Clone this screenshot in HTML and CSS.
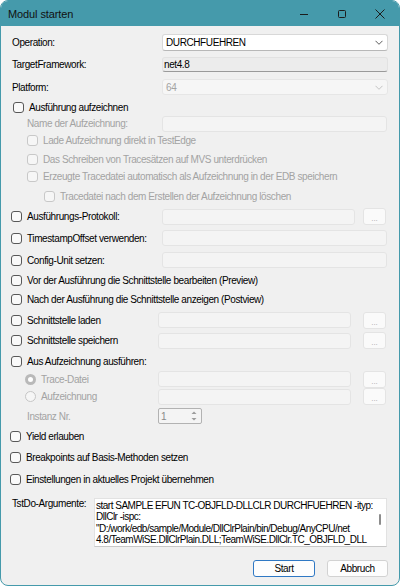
FILE: index.html
```html
<!DOCTYPE html>
<html lang="de">
<head>
    <meta charset="UTF-8">
    <meta name="viewport" content="width=device-width, initial-scale=1.0">
    <title>Modul starten</title>
    <link rel="stylesheet" href="styles.css">
</head>
<body>
<div class="window">
    <div class="titlebar">
        <span class="title">Modul starten</span>
        <div class="caption">
            <span class="cap-btn"><svg width="10" height="10" viewBox="0 0 10 10"><path d="M1 5.5h8" stroke="#1c1c1c" stroke-width="1"/></svg></span>
            <span class="cap-btn"><svg width="10" height="10" viewBox="0 0 10 10"><rect x="1.5" y="1.5" width="7" height="7" rx="1" fill="none" stroke="#1c1c1c" stroke-width="1"/></svg></span>
            <span class="cap-btn"><svg width="10" height="10" viewBox="0 0 10 10"><path d="M0.5 0.5l9 9M9.5 0.5l-9 9" stroke="#1c1c1c" stroke-width="1"/></svg></span>
        </div>
    </div>

    <div class="content">
        <div class="row h20">
            <div class="lead in11">Operation:</div>
            <div class="select">
                <span>DURCHFUEHREN</span>
                <svg width="8" height="5" viewBox="0 0 8 5"><path d="M0.5 0.8l3.5 3.5 3.5-3.5" fill="none" stroke="#5c5c5c" stroke-width="1"/></svg>
            </div>
        </div>
        <div class="row h25">
            <div class="lead in11">TargetFramework:</div>
            <div class="readonly">net4.8</div>
        </div>
        <div class="row h20">
            <div class="lead in11">Platform:</div>
            <div class="select off">
                <span>64</span>
                <svg width="8" height="5" viewBox="0 0 8 5"><path d="M0.5 0.8l3.5 3.5 3.5-3.5" fill="none" stroke="#c4c4c4" stroke-width="1"/></svg>
            </div>
        </div>

        <div class="row h20">
            <div class="lead in12"><span class="cb"></span>Ausführung aufzeichnen</div>
        </div>
        <div class="row h13">
            <div class="lead in26 gray">Name der Aufzeichnung:</div>
            <div class="tb w225"></div>
        </div>
        <div class="row h21">
            <div class="lead wide in26 gray"><span class="cb off"></span>Lade Aufzeichnung direkt in TestEdge</div>
        </div>
        <div class="row h16">
            <div class="lead wide in26 gray"><span class="cb off"></span>Das Schreiben von Tracesätzen auf MVS unterdrücken</div>
        </div>
        <div class="row h19">
            <div class="lead wide in26 gray"><span class="cb off"></span>Erzeugte Tracedatei automatisch als Aufzeichnung in der EDB speichern</div>
        </div>
        <div class="row h20">
            <div class="lead wide in43 gray"><span class="cb off"></span>Tracedatei nach dem Erstellen der Aufzeichnung löschen</div>
        </div>

        <div class="row h21">
            <div class="lead in10"><span class="cb"></span>Ausführungs-Protokoll:</div>
            <div class="tb w193"></div>
            <div class="dots gap8">...</div>
        </div>
        <div class="row h22">
            <div class="lead in10"><span class="cb"></span>TimestampOffset verwenden:</div>
            <div class="tb w225"></div>
        </div>
        <div class="row h22">
            <div class="lead in10"><span class="cb"></span>Config-Unit setzen:</div>
            <div class="tb w225"></div>
        </div>
        <div class="row h18">
            <div class="lead wide in10"><span class="cb"></span>Vor der Ausführung die Schnittstelle bearbeiten (Preview)</div>
        </div>
        <div class="row h21">
            <div class="lead wide in10"><span class="cb"></span>Nach der Ausführung die Schnittstelle anzeigen (Postview)</div>
        </div>
        <div class="row h20">
            <div class="lead short in10"><span class="cb"></span>Schnittstelle laden</div>
            <div class="tb w193"></div>
            <div class="dots gap12">...</div>
        </div>
        <div class="row h21">
            <div class="lead short in10"><span class="cb"></span>Schnittstelle speichern</div>
            <div class="tb w193"></div>
            <div class="dots gap12">...</div>
        </div>
        <div class="row h20">
            <div class="lead wide in10"><span class="cb"></span>Aus Aufzeichnung ausführen:</div>
        </div>
        <div class="row h16">
            <div class="lead short in24 gray"><span class="rb on"></span>Trace-Datei</div>
            <div class="tb w193"></div>
            <div class="dots gap12">...</div>
        </div>
        <div class="row h19">
            <div class="lead short in24 gray"><span class="rb"></span>Aufzeichnung</div>
            <div class="tb w193"></div>
            <div class="dots gap12">...</div>
        </div>
        <div class="row h20">
            <div class="lead short in26 gray">Instanz Nr.</div>
            <div class="spin">
                <span>1</span>
                <svg width="12" height="14" viewBox="0 0 12 14"><path d="M6 2.5l2.5 2.5h-5z" fill="#9c9c9c"/><path d="M3.5 9h5l-2.5 2.5z" fill="#9c9c9c"/></svg>
            </div>
        </div>

        <div class="row h21">
            <div class="lead wide in9"><span class="cb"></span>Yield erlauben</div>
        </div>
        <div class="row h20">
            <div class="lead wide in9"><span class="cb"></span>Breakpoints auf Basis-Methoden setzen</div>
        </div>
        <div class="row h24">
            <div class="lead wide in9"><span class="cb"></span>Einstellungen in aktuelles Projekt übernehmen</div>
        </div>

        <div class="args-row">
            <div class="args-label">TstDo-Argumente:</div>
            <div class="args">
                <div class="args-text">start SAMPLE EFUN TC-OBJFLD-DLLCLR DURCHFUEHREN -ityp:<br>DllClr -ispc:<br>"D:/work/edb/sample/Module/DllClrPlain/bin/Debug/AnyCPU/net<br>4.8/TeamWiSE.DllClrPlain.DLL;TeamWiSE.DllClr.TC_OBJFLD_DLL</div>
                <span class="thumb"></span>
            </div>
        </div>

        <div class="buttons">
            <button class="btn primary">Start</button>
            <button class="btn">Abbruch</button>
        </div>
    </div>
</div>
</body>
</html>
```

FILE: styles.css
```css
body {
    margin: 0;
    background: #fff;
    font-family: "Liberation Sans", Arial, sans-serif;
    font-size: 10px;
    letter-spacing: -0.4px;
    color: #000;
}
.window {
    width: 400px;
    height: 586px;
    box-sizing: border-box;
    border: 1px solid #459aab;
    border-radius: 8px;
    overflow: hidden;
    background: #f0f0f0;
    display: flex;
    flex-direction: column;
}
.titlebar {
    height: 25px;
    flex: 0 0 25px;
    background: #459aab;
    display: flex;
    align-items: center;
    padding-left: 7px;
}
.title {
    font-size: 11px;
    letter-spacing: -0.1px;
    color: #111;
}
.caption {
    margin-left: auto;
    display: flex;
    height: 100%;
}
.cap-btn {
    width: 38px;
    display: flex;
    align-items: center;
    justify-content: center;
}
.content {
    padding-top: 6px;
    display: flex;
    flex-direction: column;
}
.row {
    display: flex;
    align-items: center;
    line-height: 13px;
}
.h13 { height: 13px; }
.h16 { height: 16px; }
.h18 { height: 18px; }
.h19 { height: 19px; }
.h20 { height: 20px; }
.h21 { height: 21px; }
.h22 { height: 22px; }
.h24 { height: 24px; }
.h25 { height: 25px; }

.lead {
    flex: 0 0 161px;
    box-sizing: border-box;
    display: flex;
    align-items: center;
    white-space: nowrap;
}
.lead.short { flex-basis: 157px; }
.lead.wide { flex-basis: auto; }
.in9 { padding-left: 9px; }
.in10 { padding-left: 10px; }
.in11 { padding-left: 11px; }
.in12 { padding-left: 12px; }
.in24 { padding-left: 24px; }
.in26 { padding-left: 26px; }
.in43 { padding-left: 43px; }
.gray { color: #a3a3a3; }

.cb {
    width: 11px;
    height: 11px;
    box-sizing: border-box;
    border: 1px solid #585858;
    border-radius: 3px;
    background: #f9f9f9;
    margin-right: 5px;
    flex: none;
}
.cb.off {
    border-color: #c8c8c8;
    background: #f6f6f6;
}
.rb {
    width: 11px;
    height: 11px;
    box-sizing: border-box;
    border: 1px solid #c6c6c6;
    border-radius: 50%;
    background: #f6f6f6;
    margin-right: 5px;
    flex: none;
}
.rb.on {
    border: 3px solid #b9b9b9;
    background: #fff;
}

.select {
    width: 226px;
    height: 17px;
    box-sizing: border-box;
    border: 1px solid #d8d8d8;
    border-bottom-color: #b8b8b8;
    border-radius: 3px;
    background: #fff;
    display: flex;
    align-items: center;
    justify-content: space-between;
    padding: 0 4px 0 3px;
}
.select.off {
    height: 16px;
    background: #f6f6f6;
    border-color: #e6e6e6;
    color: #a3a3a3;
}
.readonly {
    width: 226px;
    height: 15px;
    box-sizing: border-box;
    border: 1px solid #e2e2e2;
    border-bottom-color: #9a9a9a;
    border-radius: 3px;
    background: #ececec;
    padding-left: 1px;
    display: flex;
    align-items: center;
}
.tb {
    height: 16px;
    box-sizing: border-box;
    border: 1px solid #e4e4e4;
    border-radius: 3px;
    background: #f4f4f4;
}
.w193 { width: 193px; }
.w225 { width: 225px; }
.dots {
    width: 23px;
    height: 17px;
    box-sizing: border-box;
    border: 1px solid #e4e4e4;
    border-radius: 3px;
    background: #fafafa;
    color: #a8a8a8;
    font-size: 8px;
    letter-spacing: 0;
    line-height: 8px;
    text-align: center;
    padding-top: 6px;
}
.gap8 { margin-left: 8px; }
.gap12 { margin-left: 12px; }

.spin {
    width: 44px;
    height: 16px;
    box-sizing: border-box;
    border: 1px solid #b2b2b2;
    border-radius: 2px;
    background: #f4f4f4;
    color: #8a8a8a;
    display: flex;
    align-items: center;
    justify-content: space-between;
    padding-left: 2px;
}
.spin svg {
    margin-right: 1px;
}

.args-row {
    display: flex;
    align-items: flex-start;
    margin-top: 7px;
}
.args-label {
    width: 93px;
    box-sizing: border-box;
    padding-left: 11px;
    line-height: 13px;
    margin-top: -1px;
    white-space: nowrap;
}
.args {
    position: relative;
    width: 293px;
    height: 49px;
    box-sizing: border-box;
    border: 1px solid #e2e2e2;
    border-bottom-color: #c8c8c8;
    background: #fff;
    overflow: hidden;
}
.args-text {
    padding: 1px 0 0 1px;
    line-height: 11.4px;
    letter-spacing: -0.5px;
    white-space: nowrap;
}
.thumb {
    position: absolute;
    left: 284px;
    top: 15px;
    width: 2px;
    height: 11px;
    border-radius: 1px;
    background: #8c8c8c;
}

.buttons {
    display: flex;
    justify-content: flex-end;
    gap: 12px;
    margin-top: 13px;
    padding-right: 11px;
}
.btn {
    width: 62px;
    height: 17px;
    box-sizing: border-box;
    border: 1px solid #d2d2d2;
    border-radius: 3px;
    background: #fdfdfd;
    font-family: inherit;
    font-size: 10px;
    letter-spacing: -0.4px;
    color: #000;
    padding: 0;
    line-height: 13px;
}
.btn + .btn { width: 61px; }
.btn.primary { border-color: #2f78c4; }
```
